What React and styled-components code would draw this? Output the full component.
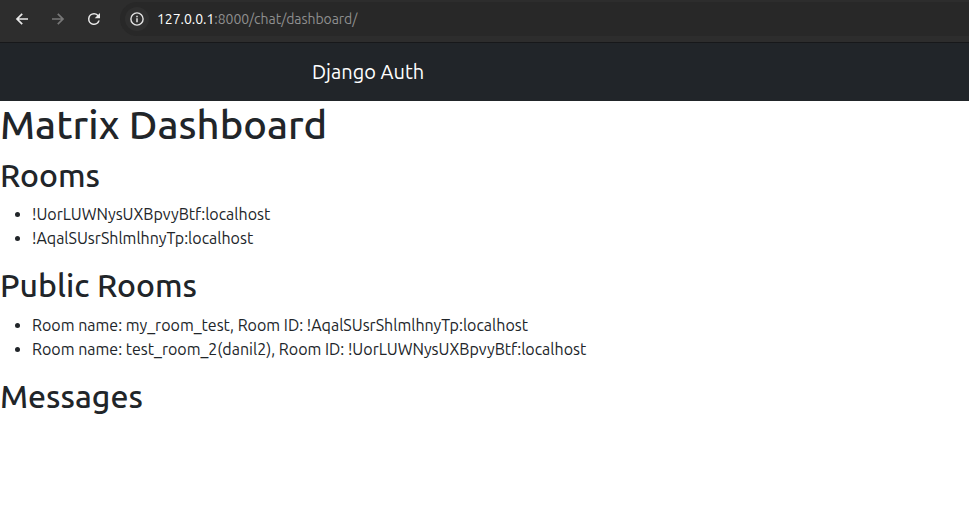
import React from "react";
import styled, { createGlobalStyle } from "styled-components";

const GlobalStyle = createGlobalStyle`
  *, *::before, *::after { box-sizing: border-box; }
  body {
    margin: 0;
    background: #fff;
    color: #212529;
    font-family: Ubuntu, "Noto Sans", sans-serif;
    font-size: 16px;
    line-height: 1.5;
    overflow: hidden;
  }
`;

const BrowserBar = styled.header`
  display: flex;
  align-items: center;
  height: 43px;
  padding: 0 0 4px 14px;
  background: #2d2d2d;
  border-bottom: 1px solid #17181a;
`;

const ToolButton = styled.span`
  display: flex;
  align-items: center;
  justify-content: center;
  width: 16px;
  height: 16px;
  margin-right: 20px;
  color: ${(p) => (p.$disabled ? "#777" : "#e8e8e8")};

  svg { flex: none; }
`;

const AddressField = styled.div`
  display: flex;
  align-items: center;
  flex: 1;
  height: 34px;
  margin-left: -2px;
  padding-left: 5px;
  background: #282828;
  border-radius: 17px 0 0 17px;
`;

const SiteInfo = styled.span`
  display: flex;
  align-items: center;
  justify-content: center;
  width: 24px;
  height: 24px;
  margin-right: 8px;
  border-radius: 50%;
  background: #2f2f2f;
  color: #e3e3e3;
`;

const Url = styled.span`
  color: #8f8f8f;
  font-size: 14px;
  line-height: 20px;
  letter-spacing: -0.045px;
  white-space: nowrap;
`;

const Host = styled.span`
  color: #fff;
`;

const Navbar = styled.nav`
  display: flex;
  align-items: center;
  height: 58px;
  padding-left: 312px;
  background: #212529;
`;

const Brand = styled.span`
  color: #fff;
  font-size: 20px;
  line-height: 30px;
`;

const Title = styled.h1`
  margin: 0 0 7px;
  font-size: 40px;
  font-weight: 500;
  line-height: 1.2;
`;

const Heading = styled.h2`
  margin: 0 0 8px;
  font-size: 32px;
  font-weight: 500;
  line-height: 1.2;
`;

const RoomList = styled.ul`
  margin: 0 0 16px;
  padding-left: 32px;
`;

const Icon = ({ children }) => (
  <svg width="16" height="16" viewBox="0 0 16 16" fill="none" stroke="currentColor" strokeWidth="1.7">
    {children}
  </svg>
);

const ReloadIcon = () => (
  <svg width="18" height="18" viewBox="0 0 24 24" fill="currentColor">
    <path d="M17.65 6.35A7.96 7.96 0 0 0 12 4a8 8 0 1 0 7.73 10h-2.08A6 6 0 1 1 12 6c1.66 0 3.14.69 4.22 1.78L13 11h7V4z" />
  </svg>
);

const rooms = ["!UorLUWNysUXBpvyBtf:localhost", "!AqalSUsrShlmlhnyTp:localhost"];
const publicRooms = [
  { name: "my_room_test", id: "!AqalSUsrShlmlhnyTp:localhost" },
  { name: "test_room_2(danil2)", id: "!UorLUWNysUXBpvyBtf:localhost" },
];

export default function App() {
  return (
    <>
      <GlobalStyle />
      <BrowserBar>
        <ToolButton>
          <Icon><path d="M14 8H3.2M8.2 2.8L3 8l5.2 5.2" /></Icon>
        </ToolButton>
        <ToolButton $disabled>
          <Icon><path d="M2 8h10.8M7.8 2.8L13 8l-5.2 5.2" /></Icon>
        </ToolButton>
        <ToolButton>
          <ReloadIcon />
        </ToolButton>
        <AddressField>
          <SiteInfo>
            <Icon>
              <circle cx="8" cy="8" r="6.1" strokeWidth="1.4" />
              <path d="M8 7.2v4M8 4.7v1.5" strokeWidth="1.5" />
            </Icon>
          </SiteInfo>
          <Url><Host>127.0.0.1</Host>:8000/chat/dashboard/</Url>
        </AddressField>
      </BrowserBar>
      <Navbar>
        <Brand>Django Auth</Brand>
      </Navbar>
      <main>
        <Title>Matrix Dashboard</Title>
        <Heading>Rooms</Heading>
        <RoomList>
          {rooms.map((id) => <li key={id}>{id}</li>)}
        </RoomList>
        <Heading>Public Rooms</Heading>
        <RoomList>
          {publicRooms.map(({ name, id }) => (
            <li key={id}>Room name: {name}, Room ID: {id}</li>
          ))}
        </RoomList>
        <Heading>Messages</Heading>
      </main>
    </>
  );
}
